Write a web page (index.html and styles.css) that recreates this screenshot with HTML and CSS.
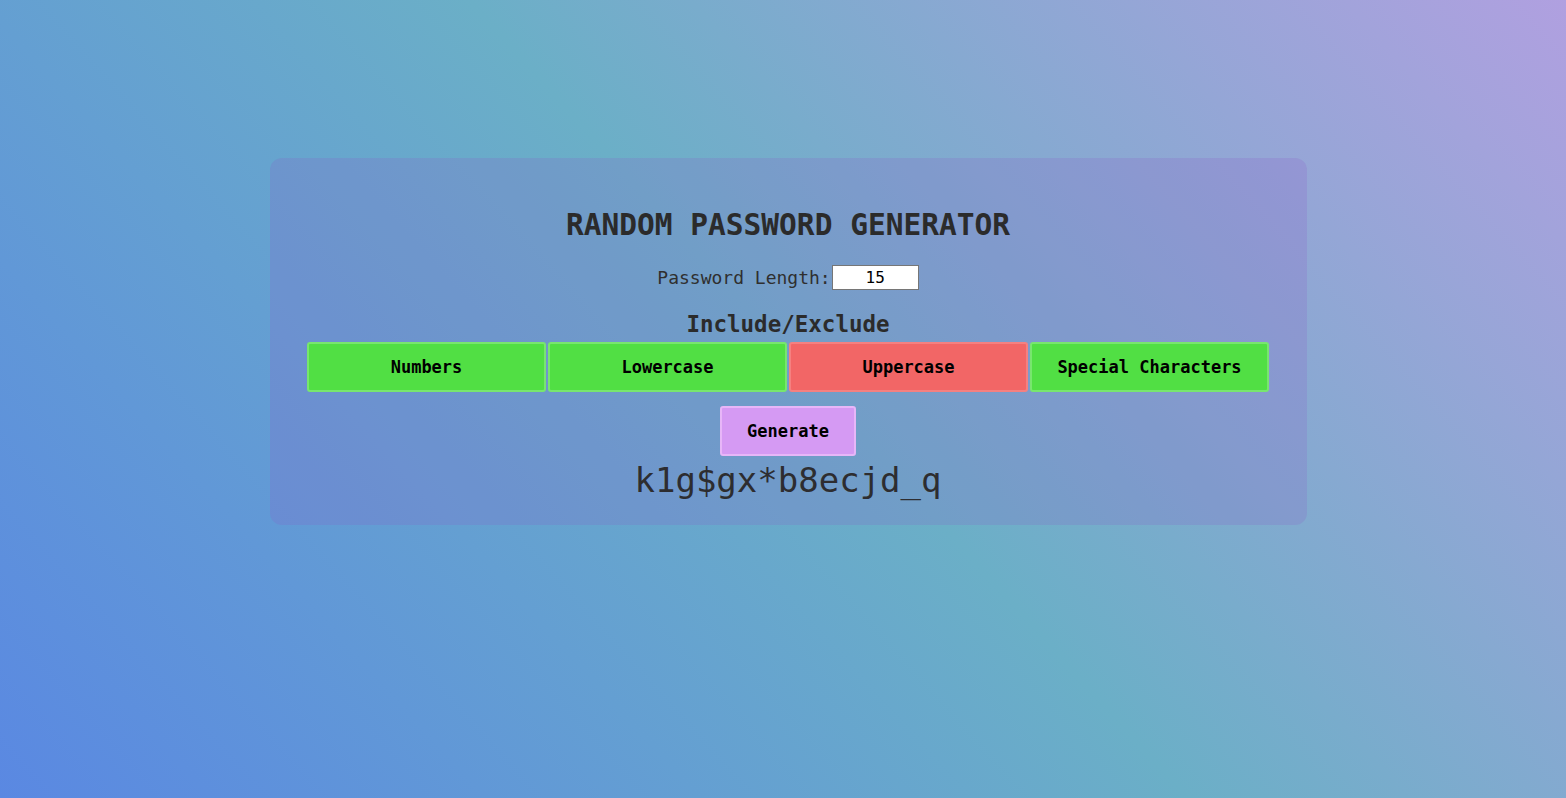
FILE: index.html
```html
<!DOCTYPE html>
<html lang="en">
<head>
<meta charset="utf-8">
<title>Random Password Generator</title>
<link rel="stylesheet" href="styles.css">
</head>
<body>
<div class="wrap">
  <main class="card">
    <h1 class="title">RANDOM PASSWORD GENERATOR</h1>
    <div class="length-row">
      <label class="length-label" for="len">Password Length:</label>
      <input class="length-input" id="len" type="text" value="15">
    </div>
    <h2 class="subtitle">Include/Exclude</h2>
    <div class="options">
      <button class="opt on">Numbers</button>
      <button class="opt on">Lowercase</button>
      <button class="opt off">Uppercase</button>
      <button class="opt on">Special Characters</button>
    </div>
    <div class="gen-row">
      <button class="generate">Generate</button>
    </div>
    <div class="result">k1g$gx*b8ecjd_q</div>
  </main>
</div>
</body>
</html>
```

FILE: styles.css
```css
html, body {
  margin: 0;
  padding: 0;
}
body {
  min-height: 100vh;
  background: linear-gradient(48deg, #5a88e2 0%, #6bafc7 52%, #b0a0e0 100%);
  font-family: "DejaVu Sans Mono", "Liberation Mono", monospace;
  color: #2b2b2b;
}
.wrap {
  display: flex;
  justify-content: center;
  padding: 158px 0 0 11px;
}
.card {
  width: 1037px;
  box-sizing: border-box;
  padding: 49px 38px 25px 37px;
  border-radius: 12px;
  background: rgba(140, 90, 200, 0.2);
}
.title {
  margin: 0;
  font-size: 29.5px;
  line-height: 36px;
  font-weight: bold;
  text-align: center;
  color: #2b2b2b;
}
.length-row {
  display: flex;
  justify-content: center;
  align-items: center;
  margin-top: 22px;
}
.length-label {
  font-size: 18px;
  color: #2f2f2f;
}
.length-input {
  width: 87px;
  height: 25px;
  box-sizing: border-box;
  margin: 0 0 0 1px;
  padding: 0;
  border: 1px solid #767676;
  background: #fff;
  font-family: "DejaVu Sans Mono", monospace;
  font-size: 16px;
  text-align: center;
  color: #000;
}
.subtitle {
  margin: 21px 0 0;
  font-size: 22.5px;
  line-height: 27px;
  font-weight: bold;
  text-align: center;
  color: #2b2b2b;
}
.options {
  display: grid;
  grid-template-columns: repeat(4, 1fr);
  gap: 2px;
  margin-top: 4px;
}
.opt, .generate {
  height: 50px;
  border-radius: 3px;
  border: 2px solid;
  font-family: "DejaVu Sans Mono", monospace;
  font-size: 17px;
  font-weight: bold;
  color: #000;
  padding: 0;
}
.opt.on {
  background: #51df44;
  border-color: #78e66e;
}
.opt.off {
  background: #f26666;
  border-color: #f58080;
}
.gen-row {
  display: flex;
  justify-content: center;
  margin-top: 14px;
}
.generate {
  width: 136px;
  background: #d59af3;
  border-color: #e7b6f8;
}
.result {
  margin-top: 4px;
  font-size: 34px;
  line-height: 40px;
  text-align: center;
  color: #2d2d30;
}
```
